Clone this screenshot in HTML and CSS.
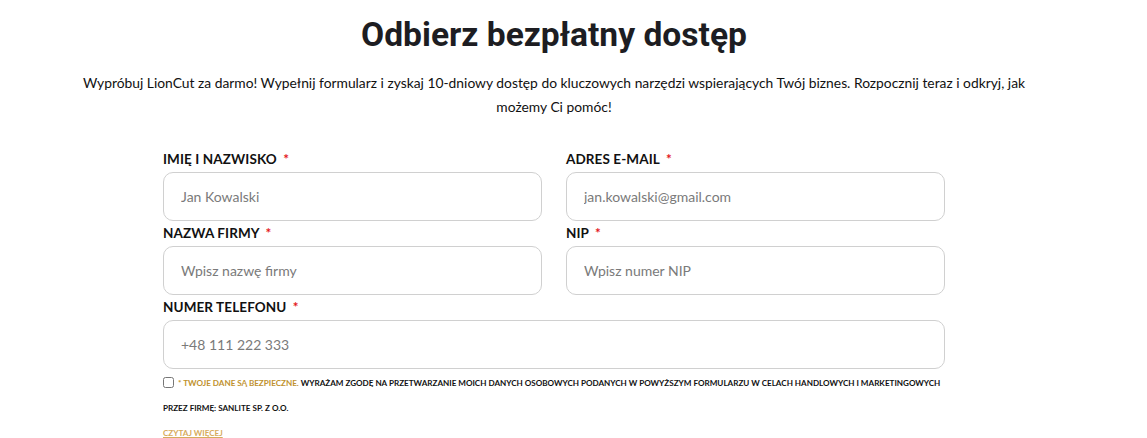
FILE: index.html
```html
<!DOCTYPE html>
<html lang="pl">
<head>
<meta charset="utf-8">
<link rel="stylesheet" href="styles.css">
</head>
<body>
<section class="page">
  <h1 class="title">Odbierz bezpłatny dostęp</h1>
  <p class="lead">Wypróbuj LionCut za darmo! Wypełnij formularz i zyskaj 10-dniowy dostęp do kluczowych narzędzi wspierających Twój biznes. Rozpocznij teraz i odkryj, jak możemy Ci pomóc!</p>
  <form class="form">
    <div class="grid">
      <div class="field">
        <label class="label">IMIĘ I NAZWISKO <span class="req">*</span></label>
        <input class="input" type="text" placeholder="Jan Kowalski">
      </div>
      <div class="field">
        <label class="label">ADRES E-MAIL <span class="req">*</span></label>
        <input class="input" type="text" placeholder="jan.kowalski@gmail.com">
      </div>
      <div class="field">
        <label class="label">NAZWA FIRMY <span class="req">*</span></label>
        <input class="input" type="text" placeholder="Wpisz nazwę firmy">
      </div>
      <div class="field">
        <label class="label">NIP <span class="req">*</span></label>
        <input class="input" type="text" placeholder="Wpisz numer NIP">
      </div>
      <div class="field full">
        <label class="label">NUMER TELEFONU <span class="req">*</span></label>
        <input class="input" type="text" placeholder="+48 111 222 333">
      </div>
    </div>
    <div class="consent">
      <input class="check" type="checkbox"><span class="gold">* TWOJE DANE SĄ BEZPIECZNE.</span> WYRAŻAM ZGODĘ NA PRZETWARZANIE MOICH DANYCH OSOBOWYCH PODANYCH W POWYŻSZYM FORMULARZU W CELACH HANDLOWYCH I MARKETINGOWYCH<br>PRZEZ FIRMĘ: SANLITE SP. Z O.O.
    </div>
    <a class="more" href="#">CZYTAJ WIĘCEJ</a>
  </form>
</section>
</body>
</html>
```

FILE: styles.css
```css
* { box-sizing: border-box; }
html, body { margin: 0; padding: 0; background: #fff; }
body { font-family: "Lato", "Noto Sans", sans-serif; color: #111; }
.page { width: 1108px; display: flex; flex-direction: column; align-items: center; padding-top: 14px; }
.title { font-family: "Roboto", sans-serif; font-weight: 700; font-size: 33.6px; line-height: 42px; margin: 0; color: #1d1d22; }
.lead { margin: 15px 0 0; width: 990px; text-align: center; font-size: 13.83px; line-height: 24px; color: #111; }
.form { width: 782px; margin-top: 29px; }
.grid { display: grid; grid-template-columns: 1fr 1fr; column-gap: 24px; row-gap: 1px; }
.field { display: flex; flex-direction: column; }
.full { grid-column: 1 / 3; }
.label { font-size: 13.5px; font-weight: 700; line-height: 22px; margin-bottom: 2px; color: #111; letter-spacing: 0.1px; }
.req { color: #e4161b; margin-left: 3px; }
.input { height: 49px; border: 1px solid #d0d0d0; border-radius: 10px; padding: 0 17px; font-family: inherit; font-size: 14px; color: #333; background: #fff; outline: none; }
.input::placeholder { color: #7a7a7a; }
.consent { margin-top: 2px; width: 800px; font-size: 8.1px; font-weight: 700; line-height: 25px; color: #111; }
.check { width: 11px; height: 11px; margin: 0 4px 0 0; vertical-align: -2px; }
.gold { color: #c0922e; }
.more { display: block; width: fit-content; font-size: 8.1px; font-weight: 700; color: #d6ab5c; text-decoration: underline; line-height: 25px; }
```
